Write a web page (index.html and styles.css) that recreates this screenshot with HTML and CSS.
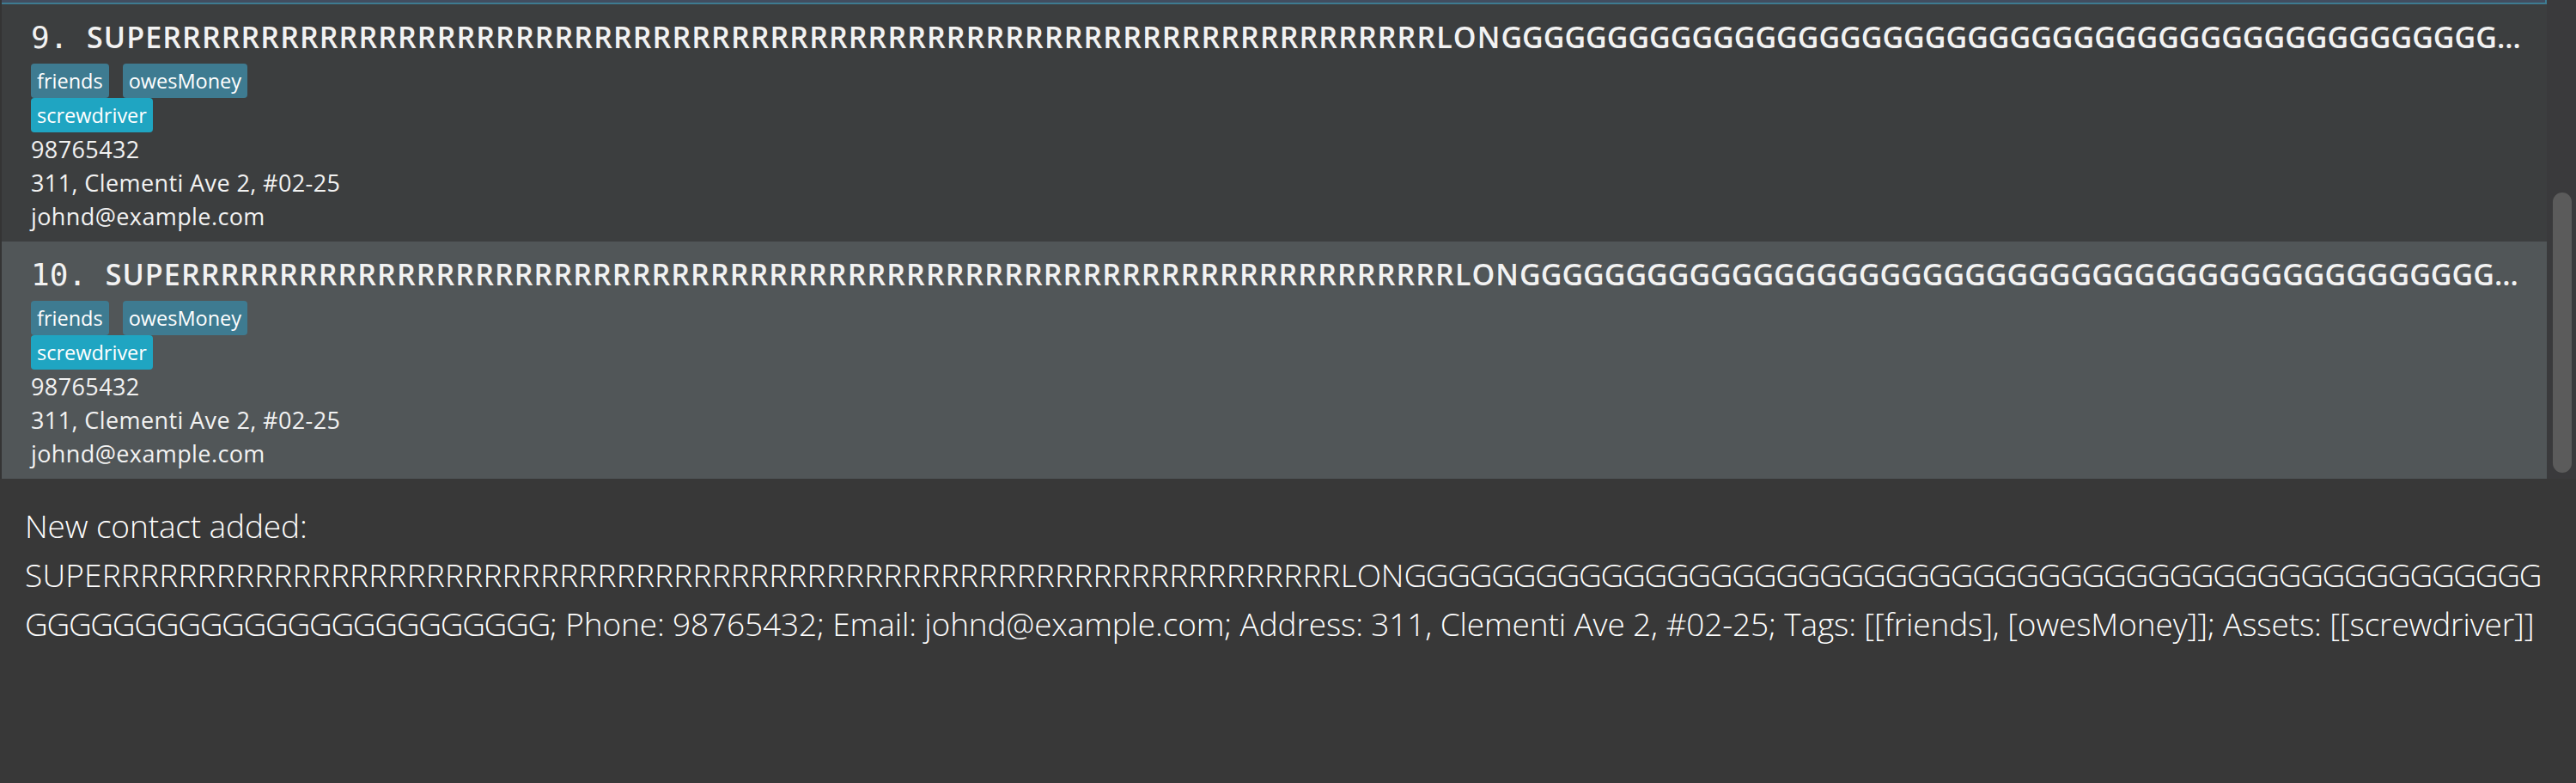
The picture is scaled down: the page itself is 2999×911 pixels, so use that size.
FILE: index.html
```html
<!DOCTYPE html>
<html lang="en">
<head>
<meta charset="utf-8">
<title>Address Book</title>
<link rel="stylesheet" href="styles.css">
</head>
<body>
<div class="app">
  <div class="list-area">
    <div class="list">
      <div class="strip"></div>
      <div class="card even">
        <div class="title"><span class="id">9. </span><span class="name">SUPERRRRRRRRRRRRRRRRRRRRRRRRRRRRRRRRRRRRRRRRRRRRRRRRRRRRRRRRRRRRRRRRRLON<span class="grun">GGGGGGGGGGGGGGGGGGGGGGGGGGGGGGGGGGGGGGGGGGGGGGGGGGGGGGGGGGGGGGGGGGGGGGGGGGGG</span></span></div>
        <div class="tags"><span class="tag">friends</span><span class="tag">owesMoney</span></div>
        <div class="tags assets"><span class="tag asset">screwdriver</span></div>
        <div class="field">98765432</div>
        <div class="field">311, Clementi Ave 2, #02-25</div>
        <div class="field">johnd@example.com</div>
      </div>
      <div class="card odd">
        <div class="title"><span class="id">10. </span><span class="name">SUPERRRRRRRRRRRRRRRRRRRRRRRRRRRRRRRRRRRRRRRRRRRRRRRRRRRRRRRRRRRRRRRRRLON<span class="grun">GGGGGGGGGGGGGGGGGGGGGGGGGGGGGGGGGGGGGGGGGGGGGGGGGGGGGGGGGGGGGGGGGGGGGGGGGGGG</span></span></div>
        <div class="tags"><span class="tag">friends</span><span class="tag">owesMoney</span></div>
        <div class="tags assets"><span class="tag asset">screwdriver</span></div>
        <div class="field">98765432</div>
        <div class="field">311, Clementi Ave 2, #02-25</div>
        <div class="field">johnd@example.com</div>
      </div>
    </div>
    <div class="scrollbar"><div class="thumb"></div></div>
  </div>
  <div class="result">New contact added: <span class="rrun">SUPERRRRRRRRRRRRRRRRRRRRRRRRRRRRRRRRRRRRRRRRRRRRRRRRRRRRRRRRRRRRRRRRR</span>LON<span class="grun">GGGGGGGGGG<!---->GGGGGGGGGG<!---->GGGGGGGGGG<!---->GGGGGGGGGG<!---->GGGGGGGGGG<!---->GG<br>GGGGGGGGGG<!---->GGGGGGGGGG<!---->GGGG</span>; Phone: 98765432; Email: johnd@example.com; Address: 311, Clementi Ave 2, #02-25; Tags: [[friends], [owesMoney]]; Assets: [[screwdriver]]</div>
</div>
</body>
</html>
```
FILE: styles.css
```css
html, body {
  margin: 0;
  padding: 0;
  background: #383838;
}

body {
  width: 2999px;
  height: 911px;
  overflow: hidden;
}

.app {
  display: flex;
  flex-direction: column;
  height: 911px;
}

.list-area {
  display: flex;
  height: 557px;
  flex: none;
  background: #3a3a3c;
}

.list {
  flex: 1;
  min-width: 0;
  display: flex;
  flex-direction: column;
  border-left: 2px solid #343434;
  overflow: hidden;
}

.strip {
  height: 3px;
  flex: none;
  background: #424d5f;
  border-bottom: 2px solid #3e7b91;
  border-right: 2px solid #3e7b91;
}

.card {
  height: 276px;
  flex: none;
  box-sizing: border-box;
  padding: 17px 21px 0 34px;
  color: #f2f2f2;
}

.card.even {
  background: #3c3e3f;
}

.card.odd {
  background: #515658;
}

.title {
  height: 42px;
  line-height: 42px;
  white-space: nowrap;
  overflow: hidden;
  text-overflow: ellipsis;
  font-family: "Open Sans", sans-serif;
  font-weight: 600;
  font-size: 34px;
  letter-spacing: 1.1px;
}

.title .id {
  font-family: "DejaVu Sans Mono", monospace;
  font-weight: 400;
  font-size: 36px;
  letter-spacing: 0;
}

.title .grun {
  letter-spacing: 0;
}

.tags {
  display: flex;
  gap: 16px;
  height: 40px;
  margin-top: 10px;
}

.tags.assets {
  margin-top: 0;
}

.tag {
  font-family: "Open Sans", sans-serif;
  font-size: 23.5px;
  line-height: 40px;
  padding: 0 7px;
  border-radius: 4px;
  background: #3e7b91;
  color: #ffffff;
}

.tag.asset {
  background: #1fa5c2;
}

.field {
  font-family: "Open Sans", sans-serif;
  font-size: 27px;
  line-height: 39px;
  letter-spacing: 0.4px;
  color: #f2f2f2;
}

.field:first-of-type {
  margin-top: -1px;
}

.scrollbar {
  width: 34px;
  flex: none;
  box-sizing: border-box;
  padding: 0 5px 0 7px;
  background: #3a3a3c;
}

.thumb {
  margin-top: 224px;
  height: 326px;
  border-radius: 11px;
  background: #5b5b5b;
}

.result {
  flex: 1;
  padding: 26px 4px 0 29px;
  font-family: "Open Sans", sans-serif;
  font-weight: 300;
  font-size: 37px;
  letter-spacing: -0.12px;
  line-height: 57px;
  color: #ffffff;
}

.result .rrun {
  letter-spacing: 0.2px;
}

.result .grun {
  letter-spacing: -1.3px;
}
```
